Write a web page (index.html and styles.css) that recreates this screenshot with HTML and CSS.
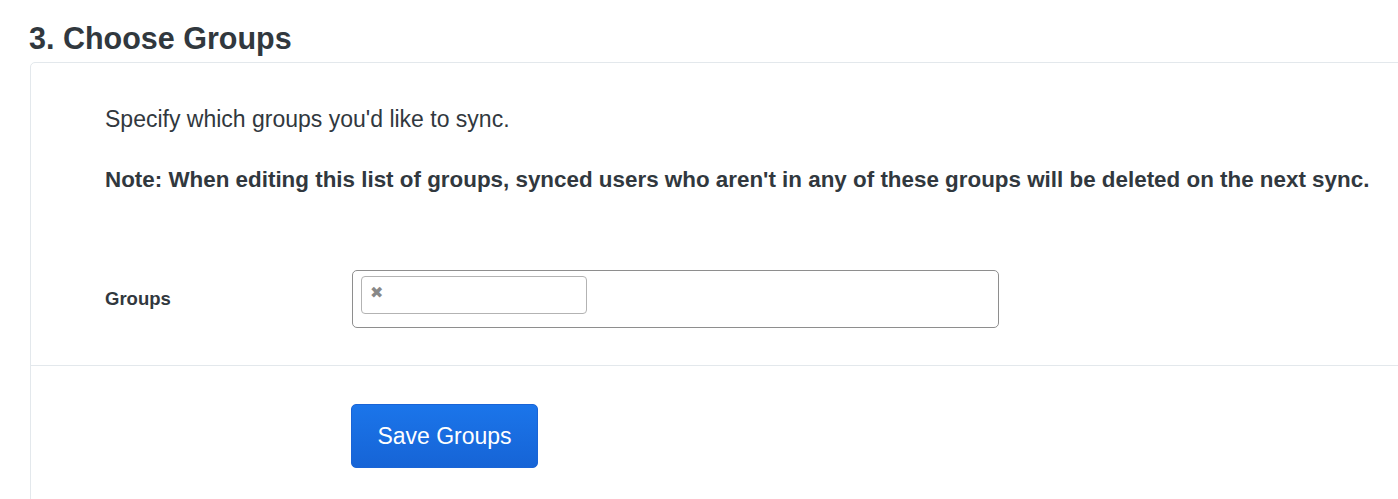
FILE: index.html
```html
<!DOCTYPE html>
<html lang="en">
<head>
<meta charset="utf-8">
<title>Choose Groups</title>
<link rel="stylesheet" href="styles.css">
</head>
<body>
<h2 class="title">3. Choose Groups</h2>
<div class="panel">
  <div class="panel-body">
    <p class="intro">Specify which groups you'd like to sync.</p>
    <p class="note">Note: When editing this list of groups, synced users who aren't in any of these groups will be deleted on the next sync.</p>
    <div class="form-row">
      <label class="label">Groups</label>
      <div class="select">
        <div class="tag-input"><span class="remove">&#x2716;</span></div>
      </div>
    </div>
  </div>
  <div class="panel-footer">
    <button class="btn-primary" type="button">Save Groups</button>
  </div>
</div>
</body>
</html>
```
FILE: styles.css
```css
html, body {
  margin: 0;
  padding: 0;
  background: #ffffff;
  overflow: hidden;
}
body {
  font-family: "Liberation Sans", Arial, Helvetica, sans-serif;
  color: #31383e;
}
.title {
  margin: 20px 0 6px 29px;
  font-size: 30.5px;
  line-height: 36px;
  font-weight: bold;
  color: #31383e;
}
.panel {
  margin-left: 30px;
  margin-right: -20px;
  border: 1px solid #e3e8ec;
  border-radius: 5px;
}
.panel-body {
  padding: 41px 0 37px 74px;
  border-bottom: 1px solid #e3e8ec;
}
.intro {
  margin: 0;
  font-size: 23px;
  line-height: 30px;
}
.note {
  margin: 31px 0 0 0;
  font-size: 22.4px;
  line-height: 30px;
  font-weight: bold;
}
.form-row {
  display: flex;
  align-items: center;
  margin-top: 75px;
}
.label {
  width: 247px;
  font-size: 18.5px;
  font-weight: bold;
}
.select {
  box-sizing: border-box;
  width: 647px;
  height: 58px;
  border: 1.5px solid #8e8e8e;
  border-radius: 5px;
  padding: 5px 8px;
}
.tag-input {
  box-sizing: border-box;
  width: 226px;
  height: 38px;
  border: 1.5px solid #b3b3b3;
  border-radius: 4px;
  padding: 6px 0 0 8px;
}
.remove {
  font-size: 16px;
  line-height: 20px;
  color: #888888;
}
.panel-footer {
  padding: 38px 0 40px 320px;
}
.btn-primary {
  width: 187px;
  height: 64px;
  border: 1px solid #1a64d6;
  border-radius: 5px;
  background: linear-gradient(#1b75ea, #1664d6);
  color: #ffffff;
  font-family: "Liberation Sans", Arial, sans-serif;
  font-size: 23px;
  padding: 0;
}
```
